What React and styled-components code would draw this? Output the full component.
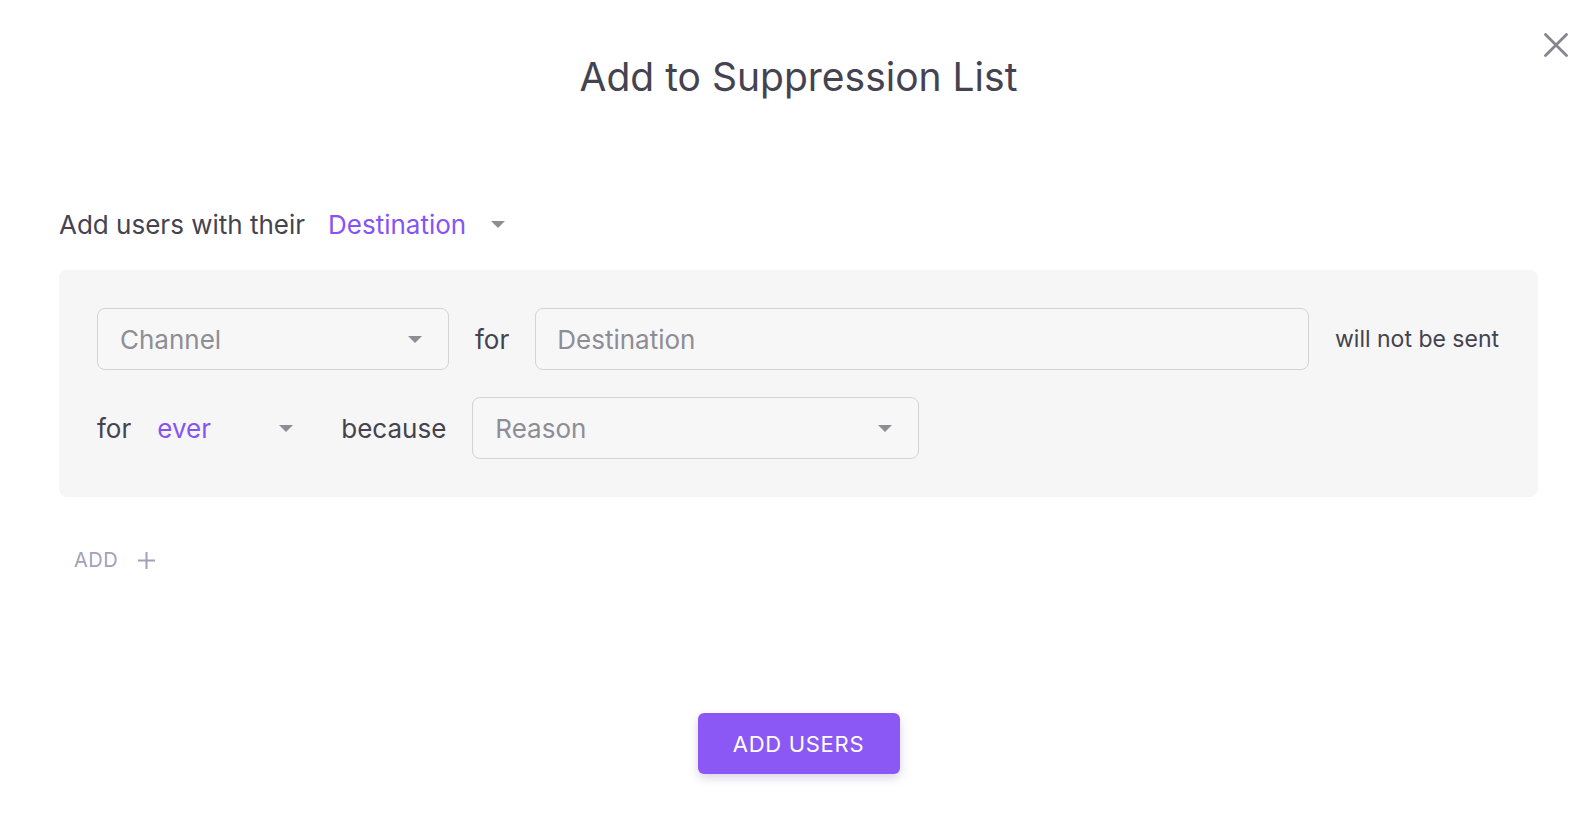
import React from "react";
import styled, { createGlobalStyle } from "styled-components";

const GlobalStyle = createGlobalStyle`
  html, body {
    margin: 0;
    padding: 0;
    background: #ffffff;
  }
  body {
    font-family: Inter, "Noto Sans", sans-serif;
    color: #44434f;
  }
`;

export const Modal = styled.div`
  position: relative;
  width: 1596px;
  height: 824px;
  box-sizing: border-box;
  padding: 53px 58px 0 59px;
  display: flex;
  flex-direction: column;
`;

export const Title = styled.h1`
  margin: 0;
  text-align: center;
  font-size: 39px;
  font-weight: 400;
  line-height: 48px;
  color: #44434f;
`;

export const CloseButton = styled.button`
  position: absolute;
  top: 30px;
  right: 25px;
  width: 30px;
  height: 30px;
  padding: 0;
  border: 0;
  background: none;
  cursor: pointer;
  display: flex;
  align-items: center;
  justify-content: center;
`;

export const IntroRow = styled.div`
  margin-top: 103px;
  display: flex;
  align-items: center;
  height: 40px;
`;

export const Label = styled.span`
  font-size: ${(p) => p.size || 26}px;
  color: #44434f;
  white-space: nowrap;
`;

export const InlineSelect = styled.div`
  display: flex;
  align-items: center;
  gap: 25px;
  width: ${(p) => (p.width ? `${p.width}px` : "auto")};
  margin-left: ${(p) => p.ml || 0}px;
  box-sizing: border-box;
  padding-right: ${(p) => p.pr || 0}px;
  justify-content: ${(p) => (p.width ? "space-between" : "flex-start")};
  font-size: 26px;
  color: #8654f5;
  cursor: pointer;
`;

export const Panel = styled.div`
  margin-top: 26px;
  width: 1479px;
  box-sizing: border-box;
  background: #f6f6f6;
  border-radius: 8px;
  padding: 38px 39px 38px 38px;
  display: flex;
  flex-direction: column;
  gap: 27px;
`;

export const Row = styled.div`
  display: flex;
  align-items: center;
  gap: 26px;
`;

export const BoxSelect = styled.div`
  width: ${(p) => p.width}px;
  height: 62px;
  box-sizing: border-box;
  border: 1px solid #d3d3d6;
  border-radius: 8px;
  background: #f7f7f7;
  display: flex;
  align-items: center;
  justify-content: space-between;
  padding: 0 26px 0 22px;
  font-size: 26px;
  color: #8e8d96;
  cursor: pointer;
`;

export const TextInput = styled.input`
  flex: 1;
  min-width: 0;
  height: 62px;
  box-sizing: border-box;
  border: 1px solid #d3d3d6;
  border-radius: 8px;
  background: #f7f7f7;
  padding: 0 21px;
  font-family: Inter, "Noto Sans", sans-serif;
  font-size: 26px;
  color: #44434f;
  outline: none;

  &::placeholder {
    color: #8e8d96;
  }
`;

export const AddLink = styled.button`
  margin-top: 51px;
  margin-left: 15px;
  align-self: flex-start;
  display: flex;
  align-items: center;
  gap: 20px;
  height: 24px;
  border: 0;
  background: none;
  padding: 0;
  font-family: Inter, "Noto Sans", sans-serif;
  font-size: 20px;
  letter-spacing: 0.5px;
  color: #a3a0ba;
  cursor: pointer;
`;

export const Footer = styled.div`
  margin-top: 141px;
  display: flex;
  justify-content: center;
`;

export const PrimaryButton = styled.button`
  width: 202px;
  height: 61px;
  border: 0;
  border-radius: 6px;
  background: #8b58f5;
  color: #ffffff;
  font-family: Inter, "Noto Sans", sans-serif;
  font-size: 22px;
  font-weight: 400;
  letter-spacing: 0.7px;
  box-shadow: 0 4px 10px rgba(80, 60, 140, 0.22);
  cursor: pointer;
`;

const Caret = () => (
  <svg width="14" height="7" viewBox="0 0 14 7">
    <path d="M0 0 L14 0 L7 7 Z" fill="#8e8d96" />
  </svg>
);

const App = () => {
  return (
    <>
      <GlobalStyle />
      <Modal>
        <CloseButton aria-label="Close">
          <svg width="24" height="24" viewBox="0 0 24 24">
            <path
              d="M1.5 1.5 L22.5 22.5 M22.5 1.5 L1.5 22.5"
              stroke="#86858f"
              strokeWidth="2.8"
              strokeLinecap="round"
            />
          </svg>
        </CloseButton>

        <Title>Add to Suppression List</Title>

        <IntroRow>
          <Label>Add users with their</Label>
          <InlineSelect ml={23}>
            Destination
            <Caret />
          </InlineSelect>
        </IntroRow>

        <Panel>
          <Row>
            <BoxSelect width={352}>
              Channel
              <Caret />
            </BoxSelect>
            <Label>for</Label>
            <TextInput placeholder="Destination" />
            <Label size={23}>will not be sent</Label>
          </Row>
          <Row>
            <Label>for</Label>
            <InlineSelect width={158} pr={22}>
              ever
              <Caret />
            </InlineSelect>
            <Label>because</Label>
            <BoxSelect width={447}>
              Reason
              <Caret />
            </BoxSelect>
          </Row>
        </Panel>

        <AddLink>
          ADD
          <svg width="17" height="17" viewBox="0 0 17 17">
            <path d="M8.5 0 V17 M0 8.5 H17" stroke="#a3a0ba" strokeWidth="2" />
          </svg>
        </AddLink>

        <Footer>
          <PrimaryButton>ADD USERS</PrimaryButton>
        </Footer>
      </Modal>
    </>
  );
};

export default App;
